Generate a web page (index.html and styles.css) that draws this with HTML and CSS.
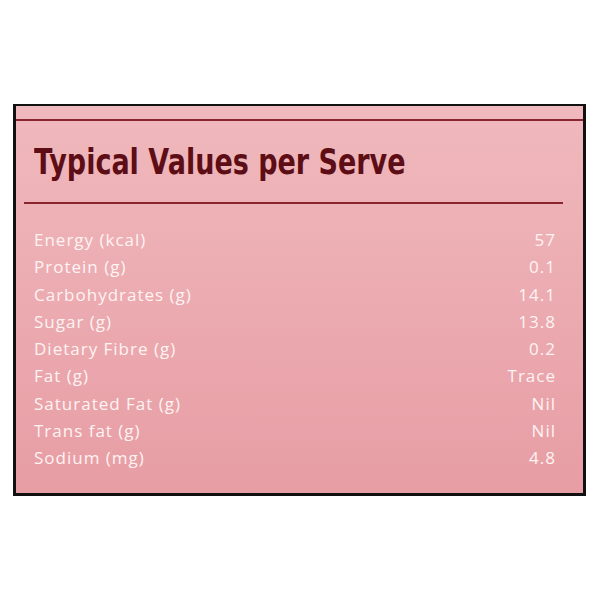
FILE: index.html
```html
<!DOCTYPE html>
<html>
<head>
<meta charset="utf-8">
<link rel="stylesheet" href="styles.css">
</head>
<body>
<div class="panel">
  <div class="top-band"></div>
  <h1 class="title">Typical Values per Serve</h1>
  <div class="rule"></div>
  <ul class="rows">
    <li class="row"><span>Energy (kcal)</span><span>57</span></li>
    <li class="row"><span>Protein (g)</span><span>0.1</span></li>
    <li class="row"><span>Carbohydrates (g)</span><span>14.1</span></li>
    <li class="row"><span>Sugar (g)</span><span>13.8</span></li>
    <li class="row"><span>Dietary Fibre (g)</span><span>0.2</span></li>
    <li class="row"><span>Fat (g)</span><span>Trace</span></li>
    <li class="row"><span>Saturated Fat (g)</span><span>Nil</span></li>
    <li class="row"><span>Trans fat (g)</span><span>Nil</span></li>
    <li class="row"><span>Sodium (mg)</span><span>4.8</span></li>
  </ul>
</div>
</body>
</html>
```
FILE: styles.css
```css
html, body {
  margin: 0;
  padding: 0;
  background: #ffffff;
}
body {
  width: 600px;
  height: 600px;
  padding-top: 104px;
  padding-left: 13px;
  box-sizing: border-box;
}
.panel {
  width: 573px;
  height: 392px;
  box-sizing: border-box;
  border: 3px solid #111;
  border-top-width: 2px;
  background: linear-gradient(180deg, #f0b9bd 0%, #ecaeb3 40%, #e79da4 100%);
  display: flex;
  flex-direction: column;
}
.top-band {
  height: 13px;
  border-bottom: 2px solid #8a2530;
}
.title {
  margin: 20px 0 0 18px;
  font-family: "DejaVu Sans", sans-serif;
  font-weight: bold;
  font-size: 36px;
  line-height: 41px;
  color: #5c0d15;
  letter-spacing: 0;
  white-space: nowrap;
  transform: scaleX(0.75);
  transform-origin: left center;
}
.rule {
  margin: 20px 20px 0 8px;
  height: 2px;
  background: #8a2530;
}
.rows {
  list-style: none;
  margin: 22px 0 0 0;
  padding: 0 27px 0 18px;
}
.row {
  display: flex;
  justify-content: space-between;
  height: 27.3px;
  line-height: 27.3px;
  font-family: "Open Sans", sans-serif;
  font-size: 17px;
  font-weight: 500;
  letter-spacing: 1px;
  color: #fff3f3;
}
```
